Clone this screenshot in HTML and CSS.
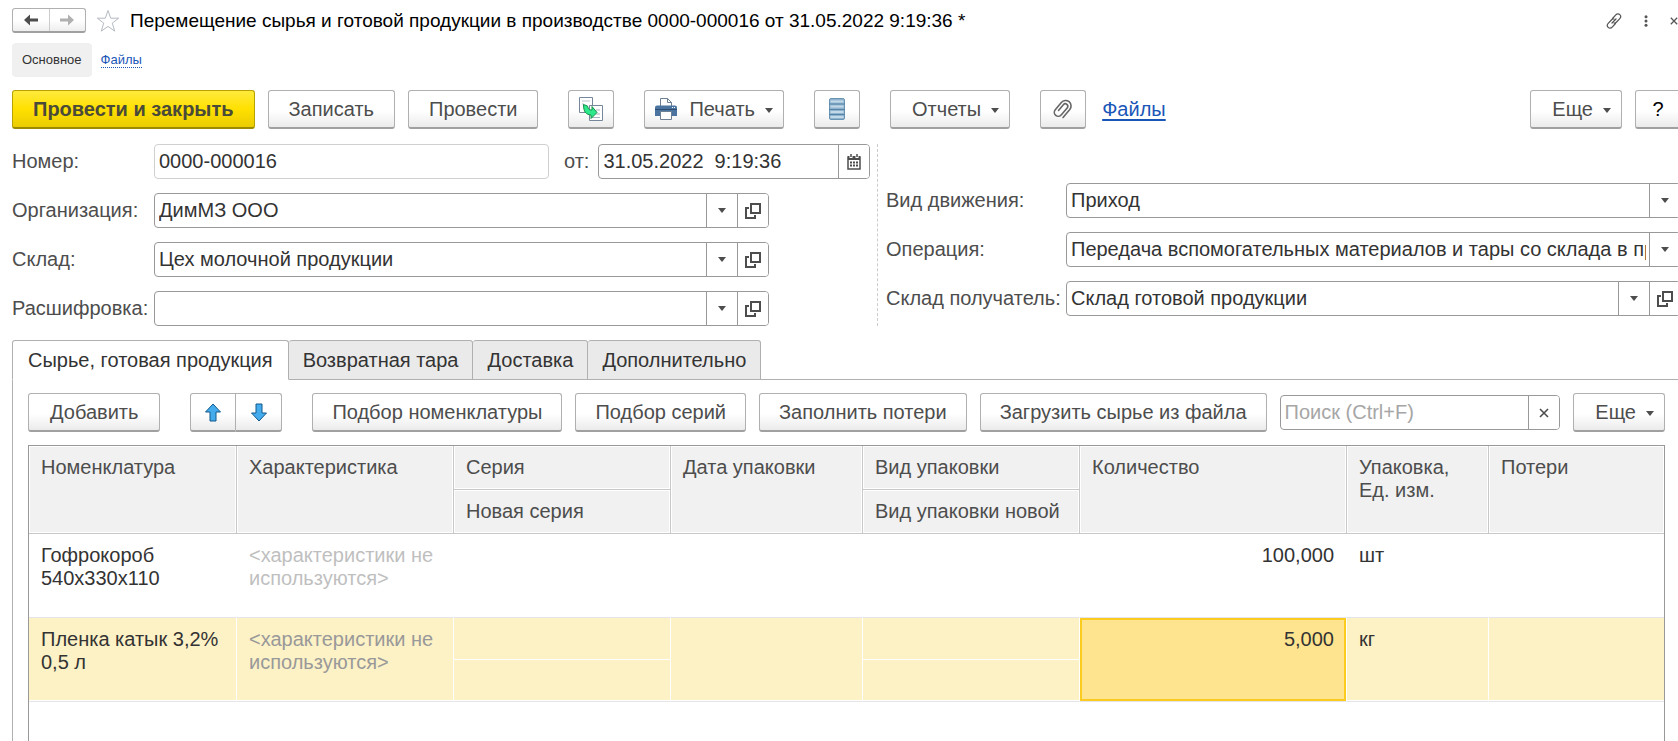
FILE: index.html
```html
<!DOCTYPE html>
<html lang="ru">
<head>
<meta charset="utf-8">
<title>Перемещение сырья и готовой продукции в производстве</title>
<link rel="stylesheet" href="styles.css">
</head>
<body>
<svg class="defs" aria-hidden="true">
  <symbol id="caret" viewBox="0 0 8 5"><path d="M0 0h8L4 5z" fill="currentColor"/></symbol>
  <symbol id="open" viewBox="0 0 16 16"><path d="M6 1h9v9H6z M4 5H1v10h9v-3" fill="none" stroke="currentColor" stroke-width="2"/></symbol>
  <symbol id="cross" viewBox="0 0 10 10"><path d="M1 1l8 8M9 1L1 9" fill="none" stroke="currentColor" stroke-width="1.6"/></symbol>
</svg>
<main class="window">
  <header class="title-bar">
    <div class="history">
      <button type="button" aria-label="Назад"><svg width="14" height="12" viewBox="0 0 14 12"><path d="M0 6l6-5.500v4h8v3H6v4z" fill="#4d4d4d"/></svg></button>
      <button type="button" aria-label="Вперед"><svg width="14" height="12" viewBox="0 0 14 12"><path d="M14 6L8 .5v4H0v3h8v4z" fill="#b0b0b0"/></svg></button>
    </div>
    <button type="button" class="plain" aria-label="В избранное"><svg width="24" height="24" viewBox="0 0 24 24"><path d="M12 1.500l2.700 7.700h8l-6.400 4.900 2.400 8L12 17.400l-6.700 4.700 2.400-8L1.300 9.200h8z" fill="#fff" stroke="#b4bac2"/></svg></button>
    <h1>Перемещение сырья и готовой продукции в производстве 0000-000016 от 31.05.2022 9:19:36 *</h1>
    <div class="window-tools">
      <button type="button" class="plain" aria-label="Ссылка"><svg width="16" height="16" viewBox="0 0 16 16" fill="none" stroke="#555" stroke-width="1.200" stroke-linecap="round"><path d="M6.500 5.500l3.300-3.700c1.200-1.300 2.900-1.300 4-.2s1.200 2.700 0 4L10.600 9c-.8.900-1.800 1.200-2.600 1M9.500 10.500l-3.300 3.700c-1.200 1.300-2.900 1.300-4 .2s-1.200-2.700 0-4L5.400 7c.8-.9 1.800-1.200 2.600-1M6 10l4-4"/></svg></button>
      <button type="button" class="plain" aria-label="Меню"><svg width="4" height="12" viewBox="0 0 4 12" fill="#555"><circle cx="2" cy="1.800" r="1.500"/><circle cx="2" cy="6" r="1.500"/><circle cx="2" cy="10.200" r="1.500"/></svg></button>
      <button type="button" class="plain" aria-label="Закрыть"><svg width="8" height="8" viewBox="0 0 10 10" color="#555"><use href="#cross"/></svg></button>
    </div>
  </header>

  <nav class="sections">
    <span class="current">Основное</span>
    <a href="#files">Файлы</a>
  </nav>

  <div class="commands">
    <button type="button" class="btn primary">Провести и закрыть</button>
    <button type="button" class="btn">Записать</button>
    <button type="button" class="btn">Провести</button>
    <button type="button" class="btn icon apart" aria-label="Создать на основании"><svg width="24" height="24" viewBox="0 0 24 24"><path d="M.5.500h13v15H.5z" fill="#fff" stroke="#76879a"/><path d="M3 4h8M3 7h2" stroke="#b8c2cc"/><path d="M10.500 8.500h13v15h-13z" fill="#fff" stroke="#76879a"/><path d="M17 13h4M17 17h4M13 20.500h8" stroke="#a8b4c0"/><path d="M4.500 7.500l4 1.500c1 3.500 2 4 4.500 4V9.500l5 6-6 6V18c-5-.5-7.500-3-7.500-10.500z" fill="#2ee88c" stroke="#149048"/></svg></button>
    <button type="button" class="btn print apart"><svg width="22" height="22" viewBox="0 0 22 22"><path d="M5.500 8V.500h7l4 4V8" fill="#fff" stroke="#6d7f93"/><path d="M12.500.5v4h4" fill="none" stroke="#6d7f93"/><path d="M2 7.500h18a2 2 0 0 1 2 2V18h-5v-4H5v4H0V9.500a2 2 0 0 1 2-2z" fill="#4c74a0"/><path d="M0 11.500h22" stroke="#2d4d70"/><path d="M17 9.500h1M19 9.500h1" stroke="#fff"/><path d="M5.500 13.500h11v8h-11z" fill="#fff" stroke="#6d7f93"/></svg>Печать<svg class="caret"><use href="#caret"/></svg></button>
    <button type="button" class="btn icon apart" aria-label="Движения документа"><svg width="16" height="22" viewBox="0 0 16 22"><rect x=".5" y=".5" width="15" height="21" rx="1.500" fill="#8fb3cf" stroke="#6a94b4"/><path d="M1.500 3.500h13M1.500 8.500h13M1.500 14h13M1.500 19h13" stroke="#c4d9e8" stroke-width="2"/><path d="M0 6h16M0 11.500h16M0 16.500h16" stroke="#5484a8"/></svg></button>
    <button type="button" class="btn menu apart">Отчеты<svg class="caret"><use href="#caret"/></svg></button>
    <button type="button" class="btn icon apart" aria-label="Прикрепить"><svg width="22" height="22" viewBox="0 0 22 22" fill="none" stroke="#666" stroke-width="1.600" stroke-linecap="round"><g transform="rotate(40 11 11)"><path d="M8.500 7v7.500a2.500 2.500 0 0 0 5 0V5.500a4 4 0 0 0-8 0V15a5.500 5.500 0 0 0 11 0V4.500" transform="rotate(180 11 11) scale(-1 1) translate(-22 0)"/></g></svg></button>
    <a class="files-link" href="#files">Файлы</a>
    <button type="button" class="btn menu push">Еще<svg class="caret"><use href="#caret"/></svg></button>
    <button type="button" class="btn help">?</button>
  </div>

  <form class="details">
    <div class="left-fields">
      <label for="number">Номер:</label>
      <div class="number-row">
        <div class="field readonly"><input id="number" value="0000-000016" readonly></div>
        <label for="date">от:</label>
        <div class="field date"><input id="date" value="31.05.2022&nbsp; 9:19:36"><button type="button" aria-label="Календарь"><svg width="14" height="16" viewBox="0 0 14 16"><path d="M1 3h12v12H1z" fill="none" stroke="#4d4d4d" stroke-width="1.500"/><path d="M1 2h12v4H1z" fill="#4d4d4d"/><path d="M4 0v4M10 0v4" stroke="#fff" stroke-width="3"/><path d="M4 0v3M10 0v3" stroke="#4d4d4d" stroke-width="1.500"/><path d="M3 8.500h8M3 11.500h8" stroke="#4d4d4d" stroke-width="2" stroke-dasharray="2 1"/></svg></button></div>
      </div>
      <label for="org">Организация:</label>
      <div class="field"><input id="org" value="ДимМЗ ООО"><button type="button" aria-label="Выбрать"><svg class="caret"><use href="#caret"/></svg></button><button type="button" aria-label="Открыть"><svg class="open"><use href="#open"/></svg></button></div>
      <label for="store">Склад:</label>
      <div class="field"><input id="store" value="Цех молочной продукции"><button type="button" aria-label="Выбрать"><svg class="caret"><use href="#caret"/></svg></button><button type="button" aria-label="Открыть"><svg class="open"><use href="#open"/></svg></button></div>
      <label for="note">Расшифровка:</label>
      <div class="field"><input id="note" value=""><button type="button" aria-label="Выбрать"><svg class="caret"><use href="#caret"/></svg></button><button type="button" aria-label="Открыть"><svg class="open"><use href="#open"/></svg></button></div>
    </div>
    <div class="right-fields">
      <label for="kind">Вид движения:</label>
      <div class="field"><input id="kind" value="Приход"><button type="button" aria-label="Выбрать"><svg class="caret"><use href="#caret"/></svg></button></div>
      <label for="operation">Операция:</label>
      <div class="field"><input id="operation" value="Передача вспомогательных материалов и тары со склада в производство"><button type="button" aria-label="Выбрать"><svg class="caret"><use href="#caret"/></svg></button></div>
      <label for="target">Склад получатель:</label>
      <div class="field"><input id="target" value="Склад готовой продукции"><button type="button" aria-label="Выбрать"><svg class="caret"><use href="#caret"/></svg></button><button type="button" aria-label="Открыть"><svg class="open"><use href="#open"/></svg></button></div>
    </div>
  </form>

  <div class="tabs" role="tablist">
    <button type="button" role="tab" aria-selected="true">Сырье, готовая продукция</button>
    <button type="button" role="tab" aria-selected="false">Возвратная тара</button>
    <button type="button" role="tab" aria-selected="false">Доставка</button>
    <button type="button" role="tab" aria-selected="false">Дополнительно</button>
  </div>

  <section class="panel">
    <div class="toolbar">
      <button type="button" class="btn">Добавить</button>
      <div class="pair apart">
        <button type="button" class="btn icon" aria-label="Вверх"><svg width="18" height="19" viewBox="0 0 18 19"><path d="M9 1l7.500 8H12v9H6V9H1.500z" fill="#44abed" stroke="#12598c" stroke-linejoin="round"/></svg></button>
        <button type="button" class="btn icon" aria-label="Вниз"><svg width="18" height="19" viewBox="0 0 18 19"><path d="M9 18l7.500-8H12V1H6v9H1.500z" fill="#44abed" stroke="#12598c" stroke-linejoin="round"/></svg></button>
      </div>
      <button type="button" class="btn long apart">Подбор номенклатуры</button>
      <button type="button" class="btn long">Подбор серий</button>
      <button type="button" class="btn long">Заполнить потери</button>
      <button type="button" class="btn long">Загрузить сырье из файла</button>
      <div class="field search"><input type="text" aria-label="Поиск" placeholder="Поиск (Ctrl+F)"><button type="button" aria-label="Очистить"><svg width="10" height="10" viewBox="0 0 10 10"><use href="#cross"/></svg></button></div>
      <button type="button" class="btn menu">Еще<svg class="caret"><use href="#caret"/></svg></button>
    </div>
    <div class="grid">
      <table>
        <colgroup><col class="c-item"><col class="c-mid"><col class="c-mid"><col class="c-date"><col class="c-mid"><col class="c-qty"><col class="c-unit"><col></colgroup>
        <thead>
          <tr><th rowspan="2">Номенклатура</th><th rowspan="2">Характеристика</th><th>Серия</th><th rowspan="2">Дата упаковки</th><th>Вид упаковки</th><th rowspan="2">Количество</th><th rowspan="2">Упаковка,<br>Ед. изм.</th><th rowspan="2" class="last">Потери</th></tr>
          <tr><th>Новая серия</th><th>Вид упаковки новой</th></tr>
        </thead>
        <tbody>
          <tr><td rowspan="2">Гофрокороб 540х330х110</td><td rowspan="2" class="muted">&lt;характеристики не используются&gt;</td><td class="upper"></td><td rowspan="2"></td><td class="upper"></td><td rowspan="2" class="num">100,000</td><td rowspan="2">шт</td><td rowspan="2" class="last"></td></tr>
          <tr><td></td><td></td></tr>
        </tbody>
        <tbody class="selected">
          <tr><td rowspan="2">Пленка катык 3,2% 0,5 л</td><td rowspan="2" class="muted">&lt;характеристики не используются&gt;</td><td class="upper"></td><td rowspan="2"></td><td class="upper"></td><td rowspan="2" class="num active">5,000</td><td rowspan="2">кг</td><td rowspan="2" class="last"></td></tr>
          <tr><td></td><td></td></tr>
        </tbody>
      </table>
    </div>
  </section>
</main>
</body>
</html>
```
FILE: styles.css
```css
* { box-sizing: border-box; }
html, body { height: 100%; }
body { margin: 0; overflow: hidden; background: #fff; color: #333; font: 20px/23px "Liberation Sans", Arial, sans-serif; }
button, input { font: inherit; color: inherit; margin: 0; padding: 0; }
button { cursor: pointer; }
svg { display: block; flex: none; }
.defs { position: absolute; width: 0; height: 0; }

/* The window is a little wider than the viewport, its right edge is cut. */
.window { display: flex; flex-direction: column; min-height: 100%; margin-right: -3px; padding: 8px 0 0 12px; }

.title-bar { display: flex; align-items: center; height: 25px; }
.history { display: flex; width: 74px; height: 25px; border: 1px solid #b0b0b0; border-bottom: 2px solid #a0a0a0; border-radius: 3px; background: linear-gradient(#fff 50%, #eee); }
.history button { flex: 1; display: flex; align-items: center; justify-content: center; border: 0; background: none; }
.history button + button { border-left: 1px solid #ccc; }
.plain { display: flex; padding: 0; border: 0; background: none; }
.history + .plain { margin: 0 10px; }
h1 { margin: 0; color: #000; font-size: 19px; font-weight: 400; line-height: 23px; white-space: nowrap; }
.window-tools { display: flex; align-items: center; gap: 22px; margin-left: auto; padding-right: 3px; }

.sections { display: flex; align-items: center; gap: 9px; margin-top: 10px; font-size: 13px; line-height: 34px; }
.current { padding: 0 10px; border-radius: 4px; background: #f0f0f0; }
.sections a { color: #1a56b8; line-height: 15px; text-decoration: none; border-bottom: 1px dotted #1a56b8; }

.commands, .toolbar { display: flex; align-items: center; gap: 13px; }
.commands { margin-top: 13px; }
.btn { display: flex; align-items: center; justify-content: center; height: 39px; padding: 0 20px; color: #4d4d4d; white-space: nowrap; border: 1px solid #b0b0b0; border-bottom: 2px solid #a0a0a0; border-radius: 3px; background: linear-gradient(#fff 55%, #ebebeb); }
.toolbar .btn:first-child { padding: 0 21px; }
.toolbar .long { padding: 0 19px; }
.primary { color: #4a4a3a; font-weight: 700; border-color: #b8a200 #b8a200 #9c8a00; background: linear-gradient(#ffea3d, #ffe000 50%, #ebcc00); }
.btn.icon { width: 46px; padding: 0; }
.apart { margin-left: 17px; }
.btn.print { padding: 0 10px; }
.print svg:first-child { margin-right: 12px; }
.btn.menu { padding: 0 10px 0 21px; }
.caret { width: 8px; height: 5px; color: #4d4d4d; }
.btn .caret { margin: 2px 0 0 10px; }
.open { width: 16px; height: 16px; color: #4d4d4d; }
.files-link { margin-left: 3px; color: #1a56b8; text-underline-offset: 3px; }
.push { margin-left: auto; }
.btn.help { width: 46px; padding: 0; color: #000; }
.pair { display: flex; }
.pair .btn:first-child { padding: 0; border-radius: 3px 0 0 3px; }
.pair .btn + .btn { border-left: 0; border-radius: 0 3px 3px 0; }

.details { display: flex; margin-top: 15px; color: #4d4d4d; }
.left-fields { display: grid; grid-template-columns: 142px 1fr; grid-auto-rows: 35px; row-gap: 14px; align-items: center; flex: none; width: 858px; }
.left-fields > .field { width: 615px; }
.number-row { display: flex; align-items: center; }
.number-row label { margin: 0 9px 0 15px; }
.right-fields { display: grid; grid-template-columns: 180px 1fr; grid-auto-rows: 35px; row-gap: 14px; align-items: center; flex: 1; min-width: 0; margin-left: 7px; padding: 39px 0 10px 8px; border-left: 1px dashed #ccc; }
.field { display: flex; height: 35px; min-width: 0; border: 1px solid #999; border-radius: 4px; background: #fff; color: #333; overflow: hidden; }
.field input { flex: 1; min-width: 0; height: 100%; margin: 0 3px 0 4px; border: 0; outline: 0; background: none; }
.field button { display: flex; flex: none; align-items: center; justify-content: center; width: 31px; border: 0; border-left: 1px solid #999; background: #fff; color: #4d4d4d; }
.readonly { width: 395px; border-color: #d0d0d0; }
.date { width: 272px; }

.tabs { display: flex; height: 40px; margin-top: 14px; border-bottom: 1px solid #b0b0b0; }
.tabs button { height: 40px; padding: 0 14px; border: 1px solid #b0b0b0; border-left: 0; border-radius: 3px 3px 0 0; background: #eaeaea; color: #333; white-space: nowrap; }
.tabs button[aria-selected="true"] { padding: 0 15px; border-left: 1px solid #b0b0b0; border-bottom-color: #fff; background: #fff; }

.panel { display: flex; flex: 1; flex-direction: column; padding: 13px 16px 0 15px; border-left: 1px solid #b0b0b0; }
.search { flex: 1; }
.search input::placeholder { color: #a6a6a6; opacity: 1; }
.grid { flex: 1; margin-top: 13px; border: 1px solid #999; border-bottom: 0; }
table { width: 100%; table-layout: fixed; border-collapse: separate; border-spacing: 0; }
.c-item { width: 208px; }
.c-mid { width: 217px; }
.c-date { width: 192px; }
.c-qty { width: 267px; }
.c-unit { width: 142px; }
th, td { padding: 10px 12px 0; vertical-align: top; text-align: left; font-weight: 400; }
th { height: 44px; color: #4d4d4d; background: #f1f1f1; border-right: 1px solid #c8c8c8; border-bottom: 1px solid #c8c8c8; box-shadow: inset 0 0 0 1px #fff; }
td { height: 42px; border-right: 1px solid #fff; border-bottom: 1px solid #e4e4ea; }
.last { border-right: 0; }
.upper { border-bottom-color: #fff; }
.muted { color: #bfbfbf; }
.num { text-align: right; }
.selected td { background: #fdf1c6; box-shadow: inset 0 -1px #fff; }
.selected .upper { box-shadow: none; }
.selected .muted { color: #999; }
.selected .active { background: #fee48f; box-shadow: inset 0 0 0 2px #fccb20; }
```
